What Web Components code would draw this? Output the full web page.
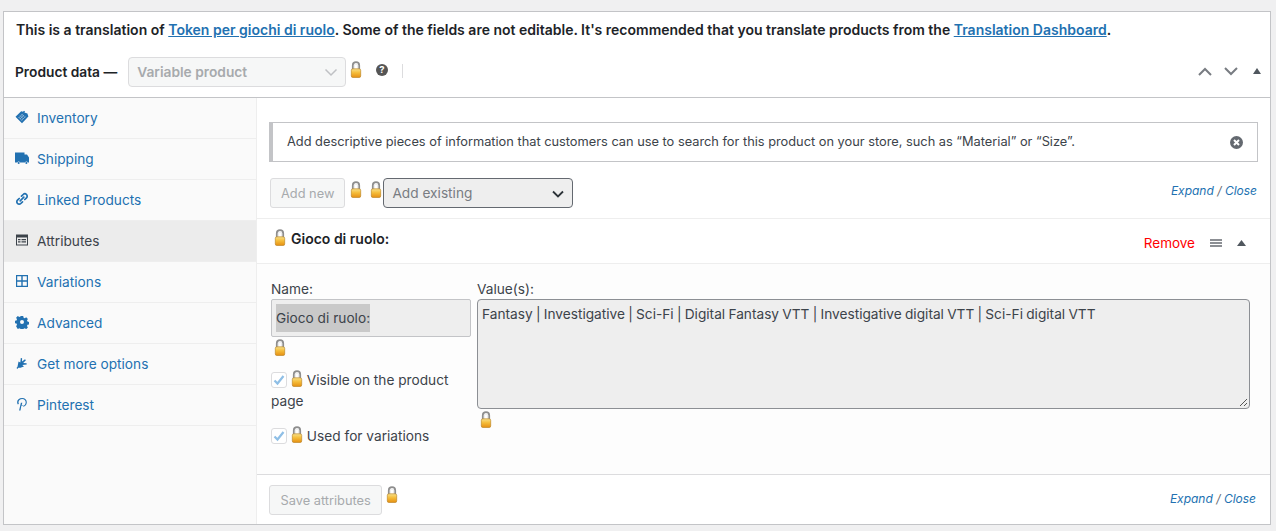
<!DOCTYPE html>
<html>
<head>
<title>Product data</title>
<style>
    html, body { margin: 0; padding: 0; background: #f0f0f1; }
    body { font: 13.7px/1.4 Inter, "Liberation Sans", sans-serif; color: #3c434a; }
    product-panel a { color: #2271b1; }
</style>
</head>
<body>
<template id="lock-icon-template">
    <style>
        :host { display: inline-block; width: 12px; height: 17px; line-height: 0; vertical-align: top; }
        svg { display: block; }
    </style>
    <svg width="12" height="17" viewBox="0 0 12 17">
        <defs>
            <linearGradient id="gold" x1="0" y1="0" x2="0" y2="1">
                <stop offset="0" stop-color="#f7e08a"/>
                <stop offset=".45" stop-color="#f5bd3a"/>
                <stop offset="1" stop-color="#e58f12"/>
            </linearGradient>
        </defs>
        <path d="M2.800 9V4.400a3.200 3.200 0 0 1 6.400 0V9" fill="none" stroke="#8e8e8e" stroke-width="1.800"/>
        <path d="M4.300 8V4.600a1.700 1.700 0 0 1 3.400 0V8" fill="none" stroke="#dedede" stroke-width=".7"/>
        <rect x="1.300" y="7.800" width="9.400" height="8.700" rx="1.600" fill="url(#gold)" stroke="#b57d1c" stroke-width=".6"/>
    </svg>
</template>

<template id="tab-item-template">
    <style>
        :host { display: flex; align-items: center; height: 39px; padding: 1px 0 0 11px; border-bottom: 1px solid #eee; color: #2271b1; }
        :host([active]) { background: #ececec; color: #3c434a; }
        .ic { width: 14px; height: 14px; margin-right: 8px; margin-top: -4px; flex: none; display: flex; }
        ::slotted(svg) { display: block; width: 14px; height: 14px; fill: currentColor; }
    </style>
    <span class="ic"><slot name="icon"></slot></span><slot></slot>
</template>

<template id="wc-button-template">
    <style>
        :host { display: inline-flex; align-items: center; height: 26px; padding: 2px 10px 0; border: 1px solid #dcdcde; border-radius: 3px; background: #f6f7f7; color: #a7aaad; font-size: 12.800px; box-sizing: content-box; }
    </style>
    <slot></slot>
</template>

<template id="attr-check-template">
    <style>
        :host { display: block; line-height: 21px; color: #3c434a; }
        .box { display: inline-block; width: 14px; height: 14px; border: 1px solid #dcdcde; border-radius: 3px; background: #fff; vertical-align: -3px; margin-right: 4px; }
        svg { display: block; }
        lock-icon { margin: 0; }
    </style>
    <span class="box"><svg width="14" height="14" viewBox="0 0 14 14"><path d="M2.500 7.500l3 3 6-7.500" fill="none" stroke="#8fbfe6" stroke-width="2.200"/></svg></span><lock-icon></lock-icon> <slot></slot>
</template>

<template id="expand-close-template">
    <style>
        :host { font-size: 12px; font-style: italic; color: #2271b1; }
        span { color: #646970; }
    </style>
    Expand <span>/</span> Close
</template>

<template id="translation-notice-template">
    <style>
        :host { display: block; padding: 8px 11px 0 12px; height: 26px; font-weight: 600; font-size: 14px; line-height: 20px; color: #1d2327; }
    </style>
    <slot></slot>
</template>

<template id="panel-header-template">
    <style>
        :host { display: flex; align-items: center; height: 51px; border-bottom: 1px solid #c3c4c7; padding: 0 11px; color: #1d2327; }
        b { font-weight: 600; font-size: 13.750px; margin: 2px 11px 0 0; }
        .sel { height: 26px; padding: 2px 0 0 8px; width: 208px; box-sizing: content-box; border: 1px solid #dcdcde; border-radius: 4px; background: #f6f7f7; color: #a7aaad; font-weight: 600; font-size: 13.750px; display: flex; align-items: center; justify-content: space-between; }
        .sel svg { margin-right: 7px; }
        lock-icon { margin: -4px 0 0 4px; }
        .help { margin: -3px 0 0 14px; }
        .sep { width: 1px; height: 14px; background: #dcdcde; margin: -1px 0 0 14px; }
        .ctl { margin-left: auto; display: flex; align-items: center; gap: 12px; margin-right: -2px; margin-top: -1px; }
        svg { display: block; }
    </style>
    <b>Product data —</b>
    <div class="sel">Variable product<svg width="14" height="9" viewBox="0 0 14 9"><path d="M1.500 1.500L7 7l5.500-5.500" fill="none" stroke="#bfc1c4" stroke-width="1.500"/></svg></div>
    <lock-icon></lock-icon>
    <svg class="help" width="12" height="12" viewBox="0 0 12 12"><circle cx="6" cy="6" r="6" fill="#555"/><text x="6" y="9.400" text-anchor="middle" font-size="9.500" font-weight="700" font-family="Inter, sans-serif" fill="#fff">?</text></svg>
    <span class="sep"></span>
    <div class="ctl">
        <svg width="14" height="9" viewBox="0 0 14 9"><path d="M1 8l6-6 6 6" fill="none" stroke="#787c82" stroke-width="2"/></svg>
        <svg width="14" height="9" viewBox="0 0 14 9"><path d="M1 1l6 6 6-6" fill="none" stroke="#787c82" stroke-width="2"/></svg>
        <svg width="8" height="6" viewBox="0 0 8 6" style="margin-left:3px"><path d="M4 0l4 6H0z" fill="#50575e"/></svg>
    </div>
</template>

<template id="info-notice-template">
    <style>
        :host { display: flex; align-items: center; justify-content: space-between; height: 38px; margin: 0 12px; border: 1px solid #c3c4c7; border-left: 4px solid #c3c4c7; background: #fff; padding: 0 14px; font-size: 12.800px; color: #3c434a; }
        svg { display: block; flex: none; }
    </style>
    <slot></slot>
    <svg width="13" height="13" viewBox="0 0 13 13"><circle cx="6.500" cy="6.500" r="6.500" fill="#646970"/><path d="M4 4l5 5M9 4l-5 5" stroke="#fff" stroke-width="2"/></svg>
</template>

<template id="attr-toolbar-template">
    <style>
        :host { display: flex; align-items: center; height: 30px; margin: 16px 13px 10px; }
        lock-icon { margin: -8px 0 0 5px; }
        lock-icon + lock-icon { margin-left: 8px; margin-right: 1px; }
        .sel { width: 172px; height: 27px; padding: 1px 8px 0 8px; border: 1px solid #646970; border-radius: 4px; background: #eee; color: #787c82; font-size: 13.700px; display: flex; align-items: center; justify-content: space-between; }
        expand-close { margin: -4px 0 0 auto; }
        svg { display: block; }
    </style>
    <wc-button>Add new</wc-button><lock-icon></lock-icon><lock-icon></lock-icon>
    <div class="sel">Add existing<svg width="12" height="8" viewBox="0 0 12 8"><path d="M1 1.500l5 5 5-5" fill="none" stroke="#2c3338" stroke-width="1.800"/></svg></div>
    <expand-close></expand-close>
</template>

<template id="attr-card-template">
    <style>
        :host { display: block; border-top: 1px solid #eee; }
        .head { display: flex; align-items: center; height: 44px; border-bottom: 1px solid #eee; background: #fff; padding: 0 20px 0 17px; color: #1d2327; }
        .head b { font-weight: 600; font-size: 14px; margin: -4px 0 0 5px; }
        .head lock-icon { margin-top: -8px; }
        .rem { margin: 5px 0 0 auto; color: #f00; font-size: 13.500px; }
        .bars { width: 12px; height: 9px; margin: 4px 0 0 15px; background: repeating-linear-gradient(#8c8f94 0 1.500px, #fff 1.500px 3px); }
        .arr { margin: 4px 4px 0 15px; }
        .body { display: flex; height: 210px; padding: 16px 20px 0 14px; box-sizing: border-box; background: #fdfdfd; gap: 6px; }
        .l { width: 200px; flex: none; }
        .r { flex: 1; }
        label { display: block; line-height: 19px; }
        .name { height: 36px; border: 1px solid #c3c4c7; border-radius: 2px; background: #eee; display: flex; align-items: center; padding-left: 4px; margin-bottom: 2px; }
        .name span { background: #c9c9c9; line-height: 28px; }
        .vals { height: 110px; border: 1px solid #8c8f94; border-radius: 4px; background: #eee; padding: 4px; box-sizing: border-box; position: relative; line-height: 20px; margin-bottom: 2px; word-spacing: -.6px; }
        .grip { position: absolute; right: 1px; bottom: 1px; }
        attr-check { margin-top: 14px; }
        .chk { margin-top: 7px; }
        .lk { display: block; margin-left: 3px; }
        svg { display: block; }
    </style>
    <div class="head">
        <lock-icon></lock-icon><b>Gioco di ruolo:</b>
        <span class="rem">Remove</span>
        <span class="bars"></span>
        <svg class="arr" width="9" height="6" viewBox="0 0 9 6"><path d="M4.500 0L9 6H0z" fill="#50575e"/></svg>
    </div>
    <div class="body">
        <div class="l">
            <label>Name:</label>
            <div class="name"><span>Gioco di ruolo:</span></div>
            <lock-icon class="lk"></lock-icon>
            <div class="chk">
                <attr-check>Visible on the product page</attr-check>
                <attr-check>Used for variations</attr-check>
            </div>
        </div>
        <div class="r">
            <label>Value(s):</label>
            <div class="vals">Fantasy | Investigative | Sci-Fi | Digital Fantasy VTT | Investigative digital VTT | Sci-Fi digital VTT
                <svg class="grip" width="9" height="9" viewBox="0 0 9 9"><path d="M1 8l7-7M5 8l3-3" stroke="#555" fill="none"/></svg>
            </div>
            <lock-icon class="lk"></lock-icon>
        </div>
    </div>
</template>

<template id="attr-footer-template">
    <style>
        :host { display: flex; align-items: flex-start; height: 50px; border-top: 1px solid #dcdcde; padding: 10px 14px 0 12px; box-sizing: border-box; }
        wc-button { padding: 2px 10.500px 0; }
        lock-icon { margin: 1px 0 0 4px; }
        expand-close { margin: 6px 0 0 auto; }
    </style>
    <wc-button>Save attributes</wc-button><lock-icon></lock-icon>
    <expand-close></expand-close>
</template>

<template id="product-panel-template">
    <style>
        :host { display: block; margin: 11px 5px 0 3px; height: 514px; box-sizing: border-box; border: 1px solid #c3c4c7; background: #fff; overflow: hidden; }
        .cols { display: flex; height: 427px; }
        nav { width: 252px; flex: none; background: #fafafa; border-right: 1px solid #eee; box-sizing: content-box; }
        main { flex: 1; min-width: 0; padding-top: 24px; }
    </style>
    <translation-notice><slot name="notice"></slot></translation-notice>
    <panel-header></panel-header>
    <div class="cols">
        <nav><slot name="tabs"></slot></nav>
        <main>
            <info-notice>Add descriptive pieces of information that customers can use to search for this product on your store, such as “Material” or “Size”.</info-notice>
            <attr-toolbar></attr-toolbar>
            <attr-card></attr-card>
            <attr-footer></attr-footer>
        </main>
    </div>
</template>

<product-panel>
    <span slot="notice">This is a translation of <a href="#">Token per giochi di ruolo</a>. Some of the fields are not editable. It's recommended that you translate products from the <a href="#">Translation Dashboard</a>.</span>
    <tab-item slot="tabs"><svg slot="icon" viewBox="0 0 14 14"><path d="M.5 6.800L6.200 1.200 8 1.800 9 .8l1 .8-.6 1 3 .8 1 3.200L7 13.300z"/><path d="M3.500 7l3.500 3.500M5 5.500l3.500 3.500M6.500 4l3.500 3.500M5 9l4-4M3.800 7.800l4-4M6.500 10.500l4-4" stroke="#fafafa" stroke-width=".5" opacity=".75"/></svg>Inventory</tab-item>
    <tab-item slot="tabs"><svg slot="icon" viewBox="0 0 14 14"><path fill-rule="evenodd" d="M0 1.500h9.500v2H12l2 3V11.500h-1.300a1.400 1.400 0 0 0-2.600 0H5a1.400 1.400 0 0 0-2.600 0H0z"/><circle cx="3.700" cy="12" r="1"/><circle cx="11.400" cy="12" r="1"/></svg>Shipping</tab-item>
    <tab-item slot="tabs"><svg slot="icon" viewBox="0 0 14 14" style="fill:none"><path d="M5.200 8.800l3.600-3.600M6.500 4.200l1.700-1.700a2.300 2.300 0 0 1 3.300 3.300L9.800 7.500M7.500 9.800l-1.700 1.700a2.300 2.300 0 0 1-3.300-3.300l1.700-1.700" fill="none" stroke="currentColor" stroke-width="1.700" stroke-linecap="round"/></svg>Linked Products</tab-item>
    <tab-item slot="tabs" active><svg slot="icon" viewBox="0 0 14 14"><path fill-rule="evenodd" d="M1 1.500h12v11H1zM2 4.500v7h10v-7zM3 6h2.500v1.200H3zM3 8.300h2.500v1.200H3zM6.500 6H11v1.200H6.500zM6.500 8.300H11v1.200H6.500z"/></svg>Attributes</tab-item>
    <tab-item slot="tabs"><svg slot="icon" viewBox="0 0 14 14"><path fill-rule="evenodd" d="M1 1h12v12H1zM2.200 2.200v4.100h4.100V2.200zM7.700 2.200v4.100h4.100V2.200zM2.200 7.700v4.100h4.100V7.700zM7.700 7.700v4.100h4.100V7.700z"/></svg>Variations</tab-item>
    <tab-item slot="tabs"><svg slot="icon" viewBox="0 0 14 14"><path fill-rule="evenodd" d="M5.800 1h2.400l.4 1.700 1.100.5 1.500-.9 1.700 1.700-.9 1.500.5 1.100 1.700.4v2.400l-1.700.4-.5 1.100.9 1.500-1.700 1.700-1.500-.9-1.100.5-.4 1.700H5.800l-.4-1.700-1.100-.5-1.500.9L1.100 11.200l.9-1.500-.5-1.100-1.700-.4V5.800l1.700-.4.500-1.100-.9-1.500L2.800 1.100l1.500.9 1.100-.5zM7 5a2 2 0 1 0 0 4 2 2 0 0 0 0-4z"/></svg>Advanced</tab-item>
    <tab-item slot="tabs"><svg slot="icon" viewBox="0 0 14 14"><path d="M3.500 5.500l1.800 1.100L5.800 2l1.300.3-.1 3.300 3-2.300.9 1L8.200 7l3.400.2.100 1.300-4.400.6L9 10.500l-3.500 1.200-2.200 0L2.500 13l-1-.9 1-1.400z"/></svg>Get more options</tab-item>
    <tab-item slot="tabs"><svg slot="icon" viewBox="0 0 14 14"><path fill-rule="evenodd" d="M7.200 1c2.800 0 4.600 1.800 4.600 4.200S10.200 9.500 8.300 9.500c-.9 0-1.600-.4-1.900-.9L5.500 13.500H4.100L5.900 5.800h1.400l-.6 2.400c.3.300.8.500 1.400.5 1.400 0 2.600-1.500 2.600-3.400 0-1.800-1.400-3.200-3.500-3.200S3.500 3.600 3.500 5.200c0 .6.200 1.100.4 1.500l-1 .7C2.400 6.800 2.100 6 2.100 5.200 2.100 2.800 4.200 1 7.200 1z"/></svg>Pinterest</tab-item>
</product-panel>

<script>
    // every element here is just a template clone, so one small factory does it
    function define(tag, templateId) {
        customElements.define(tag, class extends HTMLElement {
            constructor() {
                super();
                const shadowRoot = this.attachShadow({ mode: "open" });
                shadowRoot.appendChild(document.getElementById(templateId).content.cloneNode(true));
            }
        });
    }

    define("lock-icon", "lock-icon-template");
    define("tab-item", "tab-item-template");
    define("wc-button", "wc-button-template");
    define("attr-check", "attr-check-template");
    define("expand-close", "expand-close-template");
    define("translation-notice", "translation-notice-template");
    define("panel-header", "panel-header-template");
    define("info-notice", "info-notice-template");
    define("attr-toolbar", "attr-toolbar-template");
    define("attr-card", "attr-card-template");
    define("attr-footer", "attr-footer-template");
    define("product-panel", "product-panel-template");
</script>
</body>
</html>
